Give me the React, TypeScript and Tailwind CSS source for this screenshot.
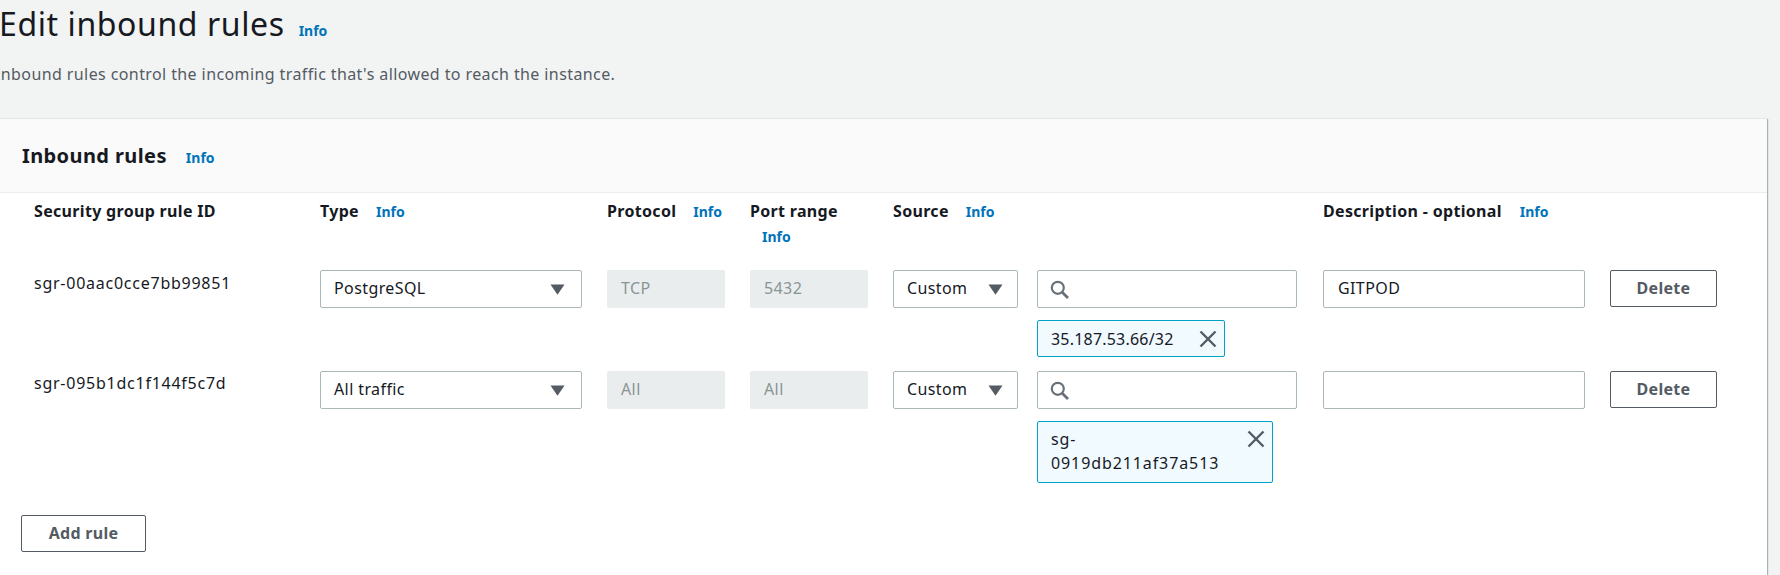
const font = { fontFamily: '"Noto Sans", Arial, sans-serif' };

function Info({ className = "" }: { className?: string }) {
  return <a className={`text-[14px] font-bold tracking-normal text-[#0073bb] ${className}`}>Info</a>;
}

function Caret() {
  return (
    <svg width="15" height="11" viewBox="0 0 15 11" className="shrink-0">
      <path d="M0.5 0.5h14L7.5 10.8z" fill="#545b64" />
    </svg>
  );
}

function SelectBox({ label, caretGap }: { label: string; caretGap: string }) {
  return (
    <div className={`flex h-[38px] items-center justify-between rounded-[2px] border border-[#aab7b8] bg-white pl-[13px] ${caretGap} text-[#16191f]`}>
      <span className="-mt-[2px]">{label}</span>
      <Caret />
    </div>
  );
}

function Disabled({ value }: { value: string }) {
  return (
    <div className="flex h-[38px] w-[118px] items-center rounded-[2px] bg-[#eaeded] pb-[2px] pl-[14px] text-[#879596]">
      {value}
    </div>
  );
}

function SearchBox() {
  return (
    <div className="flex h-[38px] w-[260px] items-center rounded-[2px] border border-[#aab7b8] bg-white pl-[12px]">
      <svg width="19" height="19" viewBox="0 0 19 19" fill="none" stroke="#687078" strokeWidth="2.2">
        <circle cx="7.8" cy="7.8" r="6" />
        <path d="M12.2 12.2 18 18" strokeWidth="2.8" />
      </svg>
    </div>
  );
}

function Close({ className = "" }: { className?: string }) {
  return (
    <svg width="18" height="18" viewBox="0 0 18 18" stroke="#545b64" strokeWidth="2.4" className={`shrink-0 ${className}`}>
      <path d="M1.5 1.5l15 15M16.5 1.5l-15 15" />
    </svg>
  );
}

function OutlineButton({ label, className }: { label: string; className: string }) {
  return (
    <button className={`rounded-[2px] border border-[#545b64] bg-white pb-[2px] text-[16px] font-bold tracking-[0.3px] text-[#545b64] ${className}`}>
      {label}
    </button>
  );
}

function HeaderCell({ label, gap = "ml-[17px]" }: { label: string; gap?: string }) {
  return (
    <div className="font-bold tracking-[0.32px] text-[#16191f]">
      {label}
      <Info className={gap} />
    </div>
  );
}

export default function App() {
  return (
    <div style={font} className="h-[575px] overflow-hidden bg-[#f2f3f3] text-[16px] leading-[24px] tracking-[0.4px] text-[#16191f]">
      {/* Page header */}
      <div className="-ml-[5px] h-[119px] pt-[4px]">
        <div className="ml-[4px] flex items-baseline">
          <h1 className="text-[32px] leading-[40px] font-normal tracking-[0.6px]">Edit inbound rules</h1>
          <Info className="ml-[14px]" />
        </div>
        <p className="mt-[18px] text-[#545b64]">Inbound rules control the incoming traffic that's allowed to reach the instance.</p>
      </div>

      {/* Card */}
      <div className="mr-[13px] h-[456px] bg-white shadow-[1px_0_1px_rgba(0,28,36,0.3)]">
        <div className="flex h-[74px] items-baseline border-b border-[#eaeded] bg-[#fafafa] pt-[24px] pl-[22px]">
          <h2 className="text-[20px] leading-[26px] font-bold tracking-[0.4px]">Inbound rules</h2>
          <Info className="ml-[19px]" />
        </div>

        <div className="grid grid-cols-[286px_287px_143px_143px_144px_286px_287px_107px] pl-[34px]">
          {/* Column titles */}
          <div className="h-[77px] pt-[6px] font-bold tracking-[0.32px]">Security group rule ID</div>
          <div className="pt-[6px]"><HeaderCell label="Type" /></div>
          <div className="pt-[6px]"><HeaderCell label="Protocol" /></div>
          <div className="w-[118px] pt-[6px] leading-[25px]">
            <div className="font-bold tracking-[0.32px]">Port range</div>
            <Info className="ml-[12px]" />
          </div>
          <div className="pt-[6px]"><HeaderCell label="Source" /></div>
          <div />
          <div className="pt-[6px]"><HeaderCell label="Description - optional" gap="ml-[18px]" /></div>
          <div />

          {/* Rule 1 */}
          <div className="pt-[1px] tracking-[0.75px]">sgr-00aac0cce7bb99851</div>
          <div className="w-[262px]"><SelectBox label="PostgreSQL" caretGap="pr-[16px]" /></div>
          <Disabled value="TCP" />
          <Disabled value="5432" />
          <div className="w-[125px]"><SelectBox label="Custom" caretGap="pr-[14px]" /></div>
          <div className="h-[101px]">
            <SearchBox />
            <div className="mt-[12px] flex h-[37px] w-[188px] items-center justify-between rounded-[2px] border border-[#00a1c9] bg-[#f1faff] pr-[7px] pl-[13px]">
              <span className="tracking-[0.2px]">35.187.53.66/32</span>
              <Close />
            </div>
          </div>
          <div className="flex h-[38px] w-[262px] items-center rounded-[2px] border border-[#aab7b8] bg-white pb-[2px] pl-[14px]">GITPOD</div>
          <OutlineButton label="Delete" className="h-[37px] w-[107px]" />

          {/* Rule 2 */}
          <div className="tracking-[0.75px]">sgr-095b1dc1f144f5c7d</div>
          <div className="w-[262px]"><SelectBox label="All traffic" caretGap="pr-[16px]" /></div>
          <Disabled value="All" />
          <Disabled value="All" />
          <div className="w-[125px]"><SelectBox label="Custom" caretGap="pr-[14px]" /></div>
          <div className="h-[144px]">
            <SearchBox />
            <div className="mt-[12px] flex h-[62px] w-[236px] justify-between rounded-[2px] border border-[#00a1c9] bg-[#f1faff] pt-[5px] pr-[7px] pl-[13px]">
              <span className="w-[190px] leading-[24px] tracking-[0.9px]">sg-<br />0919db211af37a513</span>
              <Close className="mt-[3px]" />
            </div>
          </div>
          <div className="h-[38px] w-[262px] rounded-[2px] border border-[#aab7b8] bg-white" />
          <OutlineButton label="Delete" className="h-[37px] w-[107px]" />
        </div>

        <OutlineButton label="Add rule" className="ml-[21px] h-[37px] w-[125px]" />
      </div>
    </div>
  );
}
